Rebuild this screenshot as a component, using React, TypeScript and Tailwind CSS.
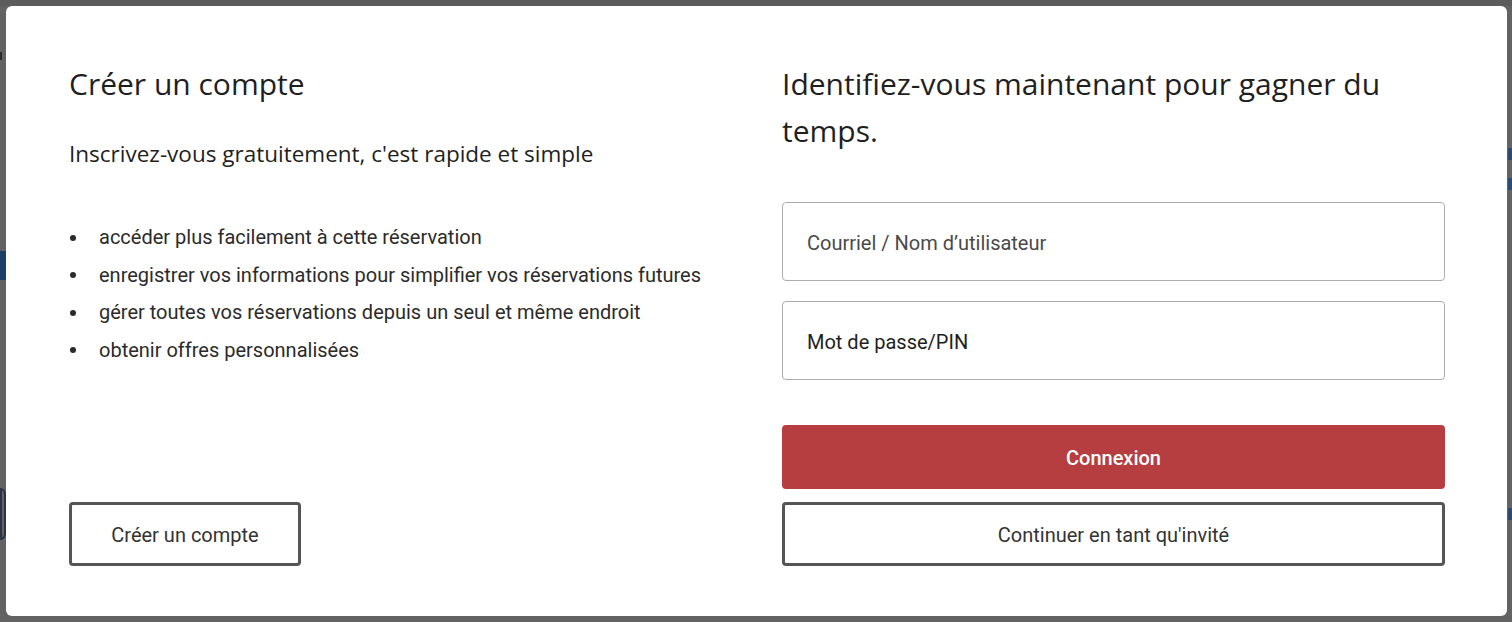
const heading = "font-['Open_Sans',_'Noto_Sans',_sans-serif] text-[#1f1f1f]";
const body = "font-['Roboto',_'Liberation_Sans',_sans-serif]";

const perks = [
  'accéder plus facilement à cette réservation',
  'enregistrer vos informations pour simplifier vos réservations futures',
  'gérer toutes vos réservations depuis un seul et même endroit',
  'obtenir offres personnalisées',
];

export default function App() {
  return (
    <div className="relative h-[622px] w-full overflow-hidden bg-[#636363] pl-[6px] pt-[6px]">
      {/* bits of the dimmed page peeking out behind the modal */}
      <div className="absolute left-0 top-0 h-[6px] w-full bg-[#5c5c5c]" />
      <div className="absolute left-0 top-[52px] h-[8px] w-[2px] bg-[#2a2a2a]" />
      <div className="absolute left-0 top-[251px] h-[29px] w-[6px] bg-[#1d3f66]" />
      <div className="absolute left-0 top-[488px] h-[52px] w-[6px] rounded-r-full border-2 border-[#2b3444]" />
      <div className="absolute right-0 top-[148px] h-[12px] w-[4px] bg-[#2c4a73]" />
      <div className="absolute right-0 top-[178px] h-[12px] w-[4px] bg-[#2c4a73]" />
      <div className="absolute right-0 top-[508px] h-[12px] w-[4px] bg-[#2c4a73]" />

      <div className="relative z-10 grid h-[610px] w-[1501px] grid-cols-2 gap-x-[50px] rounded-[6px] bg-white pb-[50px] pl-[63px] pr-[62px] pt-[54px]">
        <div className="flex flex-col">
          <h2 className={`${heading} text-[30px] leading-[47px]`}>Créer un compte</h2>
          <p className={`${heading} mt-[32px] text-[22.5px] leading-[30px]`}>
            Inscrivez-vous gratuitement, c'est rapide et simple
          </p>
          <ul className={`${body} mt-[50px] flex flex-col text-[20px] leading-[37.5px] text-[#2b2b2b]`}>
            {perks.map((perk) => (
              <li key={perk} className="flex items-center">
                <span className="ml-[1px] mr-[23px] h-[6px] w-[6px] rounded-full bg-[#2b2b2b]" />
                {perk}
              </li>
            ))}
          </ul>
          <div className="flex-1" />
          <button
            className={`${body} h-[64px] w-[232px] rounded-[4px] border-[3px] border-[#555] pt-[2px] text-[20px] text-[#333]`}
          >
            Créer un compte
          </button>
        </div>

        <div className="flex flex-col">
          <h2 className={`${heading} text-[30px] leading-[47px]`}>
            Identifiez-vous maintenant pour gagner du temps.
          </h2>
          <input
            placeholder="Courriel / Nom d’utilisateur"
            className={`${body} mt-[48px] h-[79px] w-full rounded-[4px] border border-[#adadad] px-[24px] pt-[3px] text-[20px] text-[#222] placeholder:text-[#4a4a4a]`}
          />
          <input
            type="text"
            placeholder="Mot de passe/PIN"
            className={`${body} mt-[20px] h-[79px] w-full rounded-[4px] border border-[#adadad] px-[24px] pt-[2px] text-[20px] text-[#222] placeholder:text-[#1f1f1f]`}
          />
          <div className="flex-1" />
          <button className={`${body} h-[64px] w-full rounded-[4px] bg-[#b73e40] pt-[1px] text-[20px] font-medium text-white`}>
            Connexion
          </button>
          <button
            className={`${body} mt-[13px] h-[64px] w-full rounded-[4px] border-[3px] border-[#555] pt-[2px] text-[20px] text-[#333]`}
          >
            Continuer en tant qu'invité
          </button>
        </div>
      </div>
    </div>
  );
}
